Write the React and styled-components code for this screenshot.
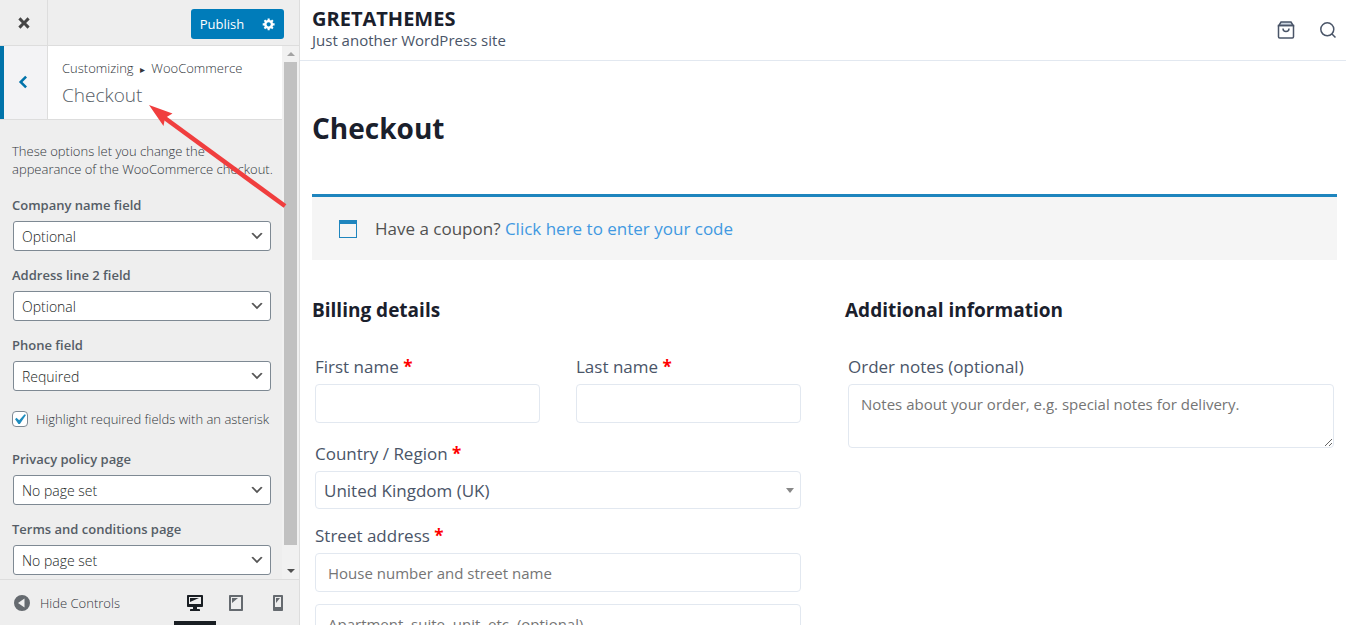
import React, { useState } from 'react'
import styled, { createGlobalStyle } from 'styled-components'

const GlobalStyle = createGlobalStyle`
  *,
  *::before,
  *::after {
    box-sizing: border-box;
  }

  body {
    margin: 0;
    background: #fff;
    font-family: 'Open Sans', 'Noto Sans', sans-serif;
  }

  h1, h2, h3, p {
    margin: 0;
  }

  button, input, select, textarea {
    font-family: inherit;
  }
`

const icons = {
  close: 'M12.12 10l3.53 3.53-2.12 2.12L10 12.12l-3.54 3.54-2.12-2.12L7.88 10 4.34 6.46l2.12-2.12L10 7.88l3.54-3.53 2.12 2.12z',
  back: 'M14 5.5L9.5 10l4.5 4.5L12.2 16.3 5.9 10l6.3-6.3z',
  gear: 'M18 12h-2.18c-.17.7-.44 1.35-.81 1.93l1.54 1.54-2.1 2.1-1.54-1.54c-.58.36-1.23.63-1.91.79V19H8v-2.18c-.68-.16-1.33-.43-1.91-.79l-1.54 1.54-2.12-2.12 1.54-1.54c-.36-.58-.63-1.23-.79-1.91H1V9.03h2.17c.16-.7.44-1.35.8-1.94L2.43 5.55l2.1-2.1 1.54 1.54c.58-.37 1.24-.64 1.93-.81V2h3v2.18c.68.16 1.33.43 1.91.79l1.54-1.54 2.12 2.12-1.54 1.54c.36.59.64 1.24.8 1.94H18V12zm-8.5 1.5c1.66 0 3-1.34 3-3s-1.34-3-3-3-3 1.34-3 3 1.34 3 3 3z',
  chevron: 'M5 6l5 5 5-5 2 1-7 7-7-7 2-1z',
  check: 'M14.83 4.89l1.34.94-5.81 8.38H9.02L5.78 9.67l1.34-1.25 2.57 2.4z',
  collapse: 'M10 2a8 8 0 1 0 0 16 8 8 0 0 0 0-16zM12.5 5.6v8.8L6 10z',
  desktop: 'M3 2h14c.55 0 1 .45 1 1v10c0 .55-.45 1-1 1h-5v2h2c.55 0 1 .45 1 1v1H5v-1c0-.55.45-1 1-1h2v-2H3c-.55 0-1-.45-1-1V3c0-.55.45-1 1-1zm13 9V4H4v7h12zM5 5h9L5 9V5z',
  tablet: 'M4 2h12c.55 0 1 .45 1 1v14c0 .55-.45 1-1 1H4c-.55 0-1-.45-1-1V3c0-.55.45-1 1-1zm11 14V4H5v12h10zM6 5h6l-6 5V5z',
  mobile: 'M6 2h8c.55 0 1 .45 1 1v14c0 .55-.45 1-1 1H6c-.55 0-1-.45-1-1V3c0-.55.45-1 1-1zm7 12V4H7v10h6zM8 5h4l-4 5V5z'
}

const Icon = ({ name, size = 20, className }) => (
  <svg className={className} width={size} height={size} viewBox='0 0 20 20' fill='currentColor' fillRule='evenodd' aria-hidden='true'>
    <path d={icons[name]} />
  </svg>
)

const Layout = styled.div`
  position: relative;
  display: flex;
  height: 100vh;
  overflow: hidden;
`

const Sidebar = styled.aside`
  display: flex;
  flex-direction: column;
  flex: 0 0 300px;
  min-width: 0;
  background: #eee;
  border-right: 1px solid #ddd;
  color: #555d66;
`

const ActionBar = styled.div`
  display: flex;
  flex: 0 0 46px;
  align-items: center;
  justify-content: space-between;
  padding-right: 15px;
  border-bottom: 1px solid #ddd;
`

const PlainButton = styled.button`
  display: flex;
  align-items: center;
  justify-content: center;
  padding: 0;
  border: 0;
  background: transparent;
  color: inherit;
  cursor: pointer;
`

const CloseButton = styled(PlainButton)`
  width: 48px;
  height: 45px;
  border-right: 1px solid #ddd;
  color: #444;
`

const PublishGroup = styled.div`
  display: flex;
  margin-top: 3px;
`

const PublishButton = styled(PlainButton)`
  width: 62px;
  height: 30px;
  background: #007cba;
  border-radius: 3px 0 0 3px;
  color: #fff;
  font-size: 13px;
`

const SettingsButton = styled(PublishButton)`
  width: 31px;
  border-radius: 0 3px 3px 0;
`

const Controls = styled.div`
  display: flex;
  flex: 1;
  min-height: 0;
`

const Panel = styled.div`
  flex: 1;
  min-width: 0;
  overflow: hidden;
`

const PanelHeader = styled.div`
  display: flex;
  height: 74px;
  background: #fff;
  border-bottom: 1px solid #ddd;
`

const BackButton = styled(PlainButton)`
  width: 48px;
  padding: 0 6px 2px 0;
  background: #f3f3f5;
  border-left: 4px solid #0073aa;
  border-right: 1px solid #ddd;
  color: #0073aa;
`

const PanelTitle = styled.div`
  padding: 13px 14px;

  p {
    color: #32373c;
    font-size: 13px;
    font-weight: 300;
    line-height: 18px;
    white-space: nowrap;
  }

  small {
    margin: 0 3px;
    font-family: 'DejaVu Sans', sans-serif;
    font-size: 10px;
  }

  h2 {
    margin-top: 3px;
    font-size: 19px;
    font-weight: 300;
    line-height: 26px;
  }
`

const PanelBody = styled.div`
  padding: 22px 0 0 12px;
`

const Description = styled.p`
  margin: 0 8px 18px 0;
  color: #32373c;
  font-size: 13px;
  font-weight: 300;
  line-height: 18px;
`

const Control = styled.div`
  margin: 0 11px 15px 0;

  label {
    display: block;
    margin-bottom: 7px;
    font-size: 13px;
    font-weight: 600;
    line-height: 18px;
  }
`

const SelectBox = styled.div`
  position: relative;
  margin: 0 0 0 1px;

  select {
    display: block;
    width: 100%;
    height: 30px;
    padding: 0 24px 0 8px;
    appearance: none;
    background: #fff;
    border: 1px solid #7e8993;
    border-radius: 3px;
    color: #191e23;
    font-size: 14px;
    font-weight: 300;
  }

  svg {
    position: absolute;
    top: 7px;
    right: 6px;
    color: #555;
    pointer-events: none;
  }
`

const CheckControl = styled.label`
  display: flex;
  align-items: center;
  gap: 8px;
  margin: 19px 0 22px;
  color: #32373c;
  font-size: 13px;
  font-weight: 300;
  line-height: 18px;
  white-space: nowrap;
`

const CheckBox = styled.span`
  position: relative;
  flex: 0 0 16px;
  height: 16px;

  input {
    display: block;
    width: 16px;
    height: 16px;
    margin: 0;
    appearance: none;
    background: #fff;
    border: 1px solid #7e8993;
    border-radius: 4px;
  }

  svg {
    position: absolute;
    top: -2px;
    left: -3px;
    color: #1e8cbe;
    pointer-events: none;
  }
`

const ScrollTrack = styled.div`
  display: flex;
  flex: 0 0 17px;
  flex-direction: column;
  align-items: center;
  background: #f1f1f1;
`

const ScrollArrow = styled.svg`
  flex: 0 0 16px;
  width: 16px;
  fill: ${props => props.$active ? '#505050' : '#a3a3a3'};
`

const ScrollThumb = styled.div`
  flex: 1;
  width: 13px;
  margin-bottom: 18px;
  background: #c1c1c1;
`

const SidebarFooter = styled.div`
  display: flex;
  flex: 0 0 46px;
  justify-content: space-between;
  border-top: 1px solid #ddd;
`

const CollapseButton = styled(PlainButton)`
  gap: 8px;
  padding-left: 12px;
  color: #32373c;
  font-size: 13px;
  font-weight: 300;

  svg {
    color: #656a6f;
  }
`

const Devices = styled.div`
  display: grid;
  flex: 0 0 125px;
  grid-template-columns: repeat(3, 1fr);
`

const DeviceButton = styled(PlainButton)`
  padding-top: 4px;
  border-bottom: 4px solid ${props => props.$active ? '#191e23' : 'transparent'};
  color: ${props => props.$active ? '#191e23' : '#656a6f'};
`

const Preview = styled.main`
  flex: 1;
  min-width: 0;
  overflow: hidden;
  color: #4a5568;
`

const SiteHeader = styled.header`
  display: flex;
  align-items: center;
  justify-content: space-between;
  height: 61px;
  padding: 0 9px 0 12px;
  border-bottom: 1px solid #e2e8f0;
`

const SiteTitle = styled.p`
  color: #1a202c;
  font-size: 20px;
  font-weight: 700;
  line-height: 22px;
`

const SiteTagline = styled.p`
  padding-bottom: 2px;
  font-size: 15px;
  line-height: 20px;
`

const SiteActions = styled.div`
  display: flex;
  gap: 24px;
`

const Page = styled.div`
  padding: 45px 9px 0 12px;
`

const PageTitle = styled.h1`
  color: #1a202c;
  font-size: 28px;
  line-height: 44px;
`

const Notice = styled.div`
  display: flex;
  align-items: center;
  gap: 18px;
  height: 66px;
  margin-top: 44px;
  padding: 0 27px;
  background: #f5f5f5;
  border-top: 3px solid #1e85be;
  color: #515151;
  font-size: 17px;

  a {
    color: #4299e1;
    text-decoration: none;
  }
`

const Columns = styled.form`
  display: grid;
  grid-template-columns: 48% 48%;
  justify-content: space-between;
  margin-top: 36px;
`

const SectionTitle = styled.h3`
  margin-bottom: 30px;
  color: #1a202c;
  font-size: 19px;
  line-height: 28px;
`

const Fields = styled.div`
  display: grid;
  grid-template-columns: 1fr 1fr;
  column-gap: 36px;
  padding: 0 3px;
`

const Field = styled.div`
  grid-column: ${props => props.$half ? 'auto' : '1 / -1'};
  margin-bottom: ${props => props.$half ? 18 : 14}px;

  label {
    display: block;
    margin-bottom: 4px;
    font-size: 17px;
    line-height: 26px;
  }

  abbr {
    color: #f00;
    font-weight: 700;
    text-decoration: none;
  }

  input,
  textarea,
  select {
    display: block;
    width: 100%;
    height: 39px;
    padding: 0 12px;
    background: #fff;
    border: 1px solid #e2e8f0;
    border-radius: 4px;
    color: #4a5568;
    font-size: 15px;
  }

  input + input {
    margin-top: 12px;
  }

  textarea {
    height: 64px;
    padding: 7px 12px;
    line-height: 24px;
  }

  ::placeholder {
    color: #757575;
  }
`

const CountrySelect = styled.div`
  position: relative;

  select {
    height: 38px;
    padding: 0 8px;
    appearance: none;
    font-size: 17px;
  }

  svg {
    position: absolute;
    top: 17px;
    right: 7px;
    pointer-events: none;
  }
`

const Annotation = styled.svg`
  position: absolute;
  top: 100px;
  left: 145px;
  pointer-events: none;
`

const SelectControl = ({ id, label, options }) => (
  <Control>
    <label htmlFor={id}>{label}</label>
    <SelectBox>
      <select id={id}>
        {options.map(option => <option key={option}>{option}</option>)}
      </select>
      <Icon name='chevron' size={16} />
    </SelectBox>
  </Control>
)

const Required = () => <abbr title='required'>*</abbr>

const App = () => {
  const [highlight, setHighlight] = useState(true)
  const [device, setDevice] = useState('desktop')

  return (
    <Layout>
      <GlobalStyle />
      <Sidebar>
        <ActionBar>
          <CloseButton aria-label='Close'><Icon name='close' /></CloseButton>
          <PublishGroup>
            <PublishButton>Publish</PublishButton>
            <SettingsButton aria-label='Publish settings'><Icon name='gear' size={14} /></SettingsButton>
          </PublishGroup>
        </ActionBar>
        <Controls>
          <Panel>
            <PanelHeader>
              <BackButton aria-label='Back'><Icon name='back' /></BackButton>
              <PanelTitle>
                <p>Customizing <small>▸</small> WooCommerce</p>
                <h2>Checkout</h2>
              </PanelTitle>
            </PanelHeader>
            <PanelBody>
              <Description>These options let you change the appearance of the WooCommerce checkout.</Description>
              <SelectControl id='company' label='Company name field' options={['Optional', 'Required', 'Hidden']} />
              <SelectControl id='address2' label='Address line 2 field' options={['Optional', 'Required', 'Hidden']} />
              <SelectControl id='phone' label='Phone field' options={['Required', 'Optional', 'Hidden']} />
              <CheckControl>
                <CheckBox>
                  <input type='checkbox' checked={highlight} onChange={e => setHighlight(e.target.checked)} />
                  {highlight && <Icon name='check' size={21} />}
                </CheckBox>
                Highlight required fields with an asterisk
              </CheckControl>
              <SelectControl id='privacy' label='Privacy policy page' options={['No page set']} />
              <SelectControl id='terms' label='Terms and conditions page' options={['No page set']} />
            </PanelBody>
          </Panel>
          <ScrollTrack aria-hidden='true'>
            <ScrollArrow viewBox='0 0 16 16'><path d='M4 10l4-4 4 4z' /></ScrollArrow>
            <ScrollThumb />
            <ScrollArrow $active viewBox='0 0 16 16'><path d='M4 6l4 4 4-4z' /></ScrollArrow>
          </ScrollTrack>
        </Controls>
        <SidebarFooter>
          <CollapseButton><Icon name='collapse' />Hide Controls</CollapseButton>
          <Devices>
            {['desktop', 'tablet', 'mobile'].map(name => (
              <DeviceButton
                key={name}
                aria-label={`Preview on ${name}`}
                $active={device === name}
                onClick={() => setDevice(name)}
              >
                <Icon name={name} />
              </DeviceButton>
            ))}
          </Devices>
        </SidebarFooter>
      </Sidebar>

      <Preview>
        <SiteHeader>
          <div>
            <SiteTitle>GRETATHEMES</SiteTitle>
            <SiteTagline>Just another WordPress site</SiteTagline>
          </div>
          <SiteActions>
            <PlainButton aria-label='Cart'>
              <svg width='18' height='18' viewBox='0 0 18 18' fill='none' stroke='#4a5568' strokeWidth='1.5'>
                <path d='M1.8 4.6L4 1h10l2.2 3.6z' fill='#cbd5e0' />
                <path d='M1.5 4.6h15v11.2q0 1.2-1.2 1.2H2.7q-1.2 0-1.2-1.2z' />
                <path d='M6 7.5c0 4 6 4 6 0' />
              </svg>
            </PlainButton>
            <PlainButton aria-label='Search'>
              <svg width='18' height='18' viewBox='0 0 18 18' fill='none' stroke='#4a5568' strokeWidth='1.5'>
                <circle cx='8.3' cy='8.3' r='6.5' />
                <path d='M13 13l3.5 3.5' />
              </svg>
            </PlainButton>
          </SiteActions>
        </SiteHeader>
        <Page>
          <PageTitle>Checkout</PageTitle>
          <Notice>
            <svg width='18' height='18' viewBox='0 0 18 18' aria-hidden='true'>
              <path d='M0 0h18v18H0zM1 4v13h16V4z' fill='#1e85be' fillRule='evenodd' />
            </svg>
            <span>Have a coupon? <a href='#coupon'>Click here to enter your code</a></span>
          </Notice>
          <Columns>
            <section>
              <SectionTitle>Billing details</SectionTitle>
              <Fields>
                <Field $half>
                  <label htmlFor='first'>First name <Required /></label>
                  <input id='first' type='text' />
                </Field>
                <Field $half>
                  <label htmlFor='last'>Last name <Required /></label>
                  <input id='last' type='text' />
                </Field>
                <Field>
                  <label htmlFor='country'>Country / Region <Required /></label>
                  <CountrySelect>
                    <select id='country'><option>United Kingdom (UK)</option></select>
                    <svg width='8' height='5' viewBox='0 0 8 5'><path d='M0 0h8L4 5z' fill='#888' /></svg>
                  </CountrySelect>
                </Field>
                <Field>
                  <label htmlFor='street'>Street address <Required /></label>
                  <input id='street' type='text' placeholder='House number and street name' />
                  <input type='text' aria-label='Apartment' placeholder='Apartment, suite, unit, etc. (optional)' />
                </Field>
              </Fields>
            </section>
            <section>
              <SectionTitle>Additional information</SectionTitle>
              <Fields>
                <Field>
                  <label htmlFor='notes'>Order notes (optional)</label>
                  <textarea id='notes' placeholder='Notes about your order, e.g. special notes for delivery.' />
                </Field>
              </Fields>
            </section>
          </Columns>
        </Page>
      </Preview>

      <Annotation width='145' height='112' viewBox='0 0 145 112' aria-hidden='true'>
        <path d='M17 16L140 106' stroke='#f03e3e' strokeWidth='4.6' />
        <path d='M4 5l23.5 8.5L20 18l-1.5 8z' fill='#f03e3e' />
      </Annotation>
    </Layout>
  )
}

export default App
